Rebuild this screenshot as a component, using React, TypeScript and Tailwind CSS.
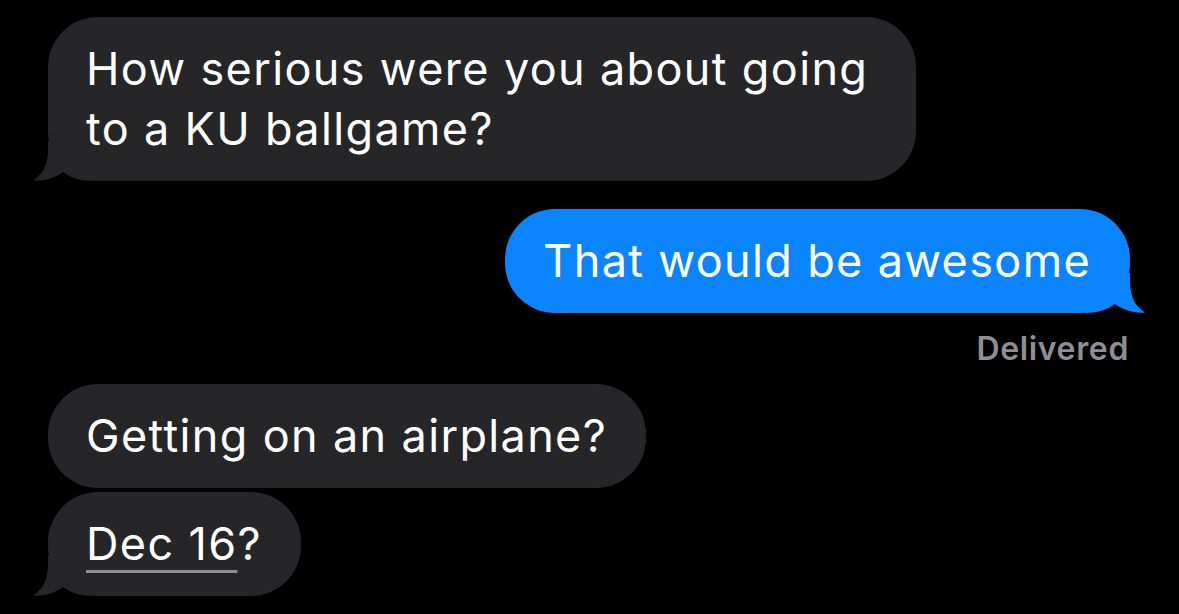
import React from 'react';
import clsx from 'clsx';

type Side = 'in' | 'out';

const Tail = ({ side, color }: { side: Side; color: string }) => (
    <svg
        width="60"
        height="40"
        viewBox="0 0 60 40"
        className={side === 'in' ? 'absolute bottom-0 -left-[15px]' : 'absolute bottom-0 -right-[15px] -scale-x-100'}
    >
        <path d="M15 0 L15 8 C15 24 10 33 0 39.5 C11 40.5 22 37 30 31 C38 37 48 40 60 40 L60 0 Z" fill={color} />
    </svg>
);

const Bubble = ({
    side,
    tail,
    wide,
    children,
}: {
    side: Side;
    tail?: boolean;
    wide?: boolean;
    children: React.ReactNode;
}) => {
    const color = side === 'in' ? '#262628' : '#0a84ff';
    return (
        <div
            className={clsx(
                'relative rounded-[50px] pl-[38px] py-[22px] text-white',
                side === 'in' ? 'self-start bg-[#262628]' : 'self-end bg-[#0a84ff]',
                wide ? 'pr-[48px]' : 'pr-[39px]'
            )}
        >
            {tail && <Tail side={side} color={color} />}
            <div className="relative text-[45px] leading-[60px] tracking-[0.03em]">{children}</div>
        </div>
    );
};

export default function App() {
    return (
        <div
            className="flex h-[614px] w-[1179px] flex-col overflow-hidden bg-black pl-[48px] pr-[49px] pt-[17px]"
            style={{ fontFamily: 'Inter, "Noto Sans", sans-serif' }}
        >
            <Bubble side="in" tail wide>
                How serious were you about going
                <br />
                to a KU ballgame?
            </Bubble>

            <div className="mt-[28px] flex flex-col">
                <Bubble side="out" tail>
                    That would be awesome
                </Bubble>
                <div className="mr-[1px] mt-[16px] mb-[15px] self-end text-[32px] font-semibold leading-[40px] tracking-[0.02em] text-[#8e8e93]">
                    Delivered
                </div>
            </div>

            <Bubble side="in">Getting on an airplane?</Bubble>
            <div className="mt-[4px] flex flex-col">
                <Bubble side="in" tail>
                    <span className="underline decoration-[#8e8e93] decoration-[3px] underline-offset-[10px]">Dec 16</span>?
                </Bubble>
            </div>
        </div>
    );
}
